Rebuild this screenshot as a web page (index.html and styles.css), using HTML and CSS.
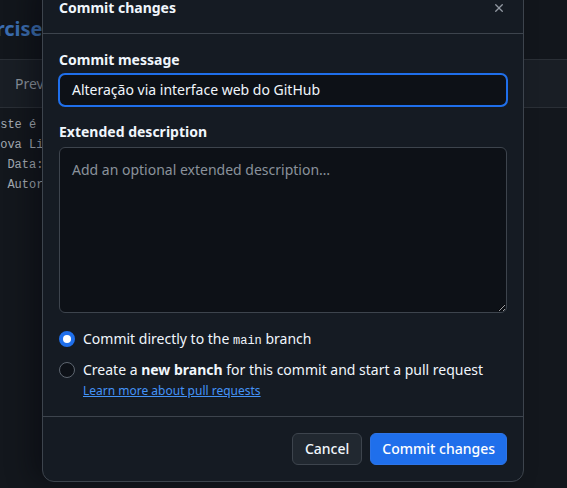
FILE: index.html
```html
<!DOCTYPE html>
<html lang="pt-BR">
<head>
<meta charset="utf-8">
<title>Commit changes</title>
<link rel="stylesheet" href="styles.css">
</head>
<body>
<div class="page">
  <div class="topbar"><span class="repo">exercises</span></div>
  <div class="toolbar"><span class="tab">Preview</span></div>
  <div class="code">
    <div class="line">Este é o</div>
    <div class="line">Nova Lista</div>
    <div class="line">  Data:</div>
    <div class="line">  Autor</div>
  </div>
</div>

<div class="dialog">
  <div class="dialog-header">
    <h1 class="dialog-title">Commit changes</h1>
    <button class="close" aria-label="Close">
      <svg width="16" height="16" viewBox="0 0 16 16"><path fill="currentColor" d="M3.72 3.72a.75.75 0 0 1 1.06 0L8 6.94l3.22-3.220a.749.749 0 0 1 1.275.326.749.749 0 0 1-.215.734L9.06 8l3.22 3.22a.749.749 0 0 1-.326 1.275.749.749 0 0 1-.734-.215L8 9.06l-3.220 3.220a.751.751 0 0 1-1.042-.018.751.751 0 0 1-.018-1.042L6.94 8 3.72 4.78a.75.75 0 0 1 0-1.060Z"/></svg>
    </button>
  </div>
  <div class="dialog-body">
    <label class="label">Commit message</label>
    <div class="input focused">Alteração via interface web do GitHub</div>
    <label class="label label-2">Extended description</label>
    <textarea class="textarea" placeholder="Add an optional extended description…"></textarea>
    <div class="radios">
      <div class="radio-row">
        <span class="radio checked"></span>
        <span class="radio-text">Commit directly to the <code>main</code> branch</span>
      </div>
      <div class="radio-row">
        <span class="radio"></span>
        <div class="radio-col">
          <span class="radio-text">Create a <b>new branch</b> for this commit and start a pull request</span>
          <a class="link" href="#">Learn more about pull requests</a>
        </div>
      </div>
    </div>
  </div>
  <div class="dialog-footer">
    <button class="btn">Cancel</button>
    <button class="btn btn-primary">Commit changes</button>
  </div>
</div>
</body>
</html>
```

FILE: styles.css
```css
* { box-sizing: border-box; }
html, body {
  margin: 0;
  padding: 0;
  width: 567px;
  height: 488px;
  overflow: hidden;
  background: #13171d;
  font-family: "Noto Sans", "Liberation Sans", sans-serif;
  font-size: 14px;
  color: #f0f6fc;
}
.page {
  display: flex;
  flex-direction: column;
  height: 488px;
}
.topbar {
  height: 60px;
  display: flex;
  align-items: center;
  border-bottom: 1px solid #2a2f36;
  background: #12161c;
}
.repo {
  margin-left: -39px;
  font-size: 20px;
  font-weight: 700;
  color: #3b6db0;
  padding-bottom: 3px;
}
.toolbar {
  height: 48px;
  display: flex;
  align-items: center;
  background: #191e25;
  border-bottom: 1px solid #2a2f36;
}
.tab {
  margin-left: 15px;
  color: #8a919a;
}
.code {
  padding-top: 7px;
  font-family: "Liberation Mono", "DejaVu Sans Mono", monospace;
  font-size: 12px;
  line-height: 20px;
  color: #a4abb3;
}
.line {
  white-space: pre;
  margin-left: -7px;
}

.dialog {
  position: absolute;
  left: 42px;
  top: -17px;
  width: 482px;
  background: #151b23;
  border: 1px solid #3d444d;
  border-radius: 12px;
  box-shadow: -12px 0 24px rgba(1, 4, 9, 0.35);
}
.dialog-header {
  height: 50px;
  display: flex;
  align-items: center;
  justify-content: space-between;
  padding: 0 8px 0 16px;
  border-bottom: 1px solid #3d444d;
}
.dialog-title {
  margin: 0;
  padding-bottom: 2px;
  font-size: 14px;
  font-weight: 700;
  line-height: 20px;
  color: #f0f6fc;
}
.close {
  width: 32px;
  height: 32px;
  display: flex;
  align-items: center;
  justify-content: center;
  background: none;
  border: 0;
  padding: 0 0 2px;
  color: #9198a1;
}
.close svg { width: 14px; height: 14px; }
.dialog-body {
  padding: 16px 16px 15px;
  display: flex;
  flex-direction: column;
}
.label {
  font-weight: 700;
  line-height: 20px;
  margin-bottom: 4px;
}
.label-2 { margin-top: 16px; margin-bottom: 5px; }
.input {
  height: 32px;
  border: 1px solid #3d444d;
  border-radius: 6px;
  background: #0d1117;
  padding: 0 12px;
  display: flex;
  align-items: center;
  line-height: 20px;
  color: #f0f6fc;
}
.input.focused {
  outline: 2px solid #1f6feb;
  outline-offset: -1px;
}
.textarea {
  display: block;
  width: 100%;
  height: 166px;
  border: 1px solid #3d444d;
  border-radius: 6px;
  background: #0d1117;
  padding: 12px 12px;
  font-family: inherit;
  font-size: 14px;
  line-height: 20px;
  color: #f0f6fc;
  resize: vertical;
  margin: 0;
}
.textarea::placeholder { color: #8a929b; }
.radios {
  margin-top: 16px;
  display: flex;
  flex-direction: column;
  gap: 9px;
}
.radio-row {
  display: flex;
  align-items: flex-start;
  gap: 8px;
}
.radio {
  flex: none;
  width: 16px;
  height: 16px;
  margin-top: 2px;
  border-radius: 50%;
  border: 1px solid #5e6670;
  background: #0d1117;
}
.radio.checked {
  background: #1f6feb;
  border: 4px solid #1f6feb;
  position: relative;
}
.radio.checked::after {
  content: "";
  position: absolute;
  inset: 0;
  border-radius: 50%;
  background: #ffffff;
}
.radio-text { line-height: 20px; }
.radio-text code {
  font-family: "Liberation Mono", "DejaVu Sans Mono", monospace;
  font-size: 12px;
}
.radio-col { display: flex; flex-direction: column; }
.link {
  margin-top: 1px;
  font-size: 12px;
  line-height: 20px;
  color: #4493f8;
  text-decoration: underline;
}
.dialog-footer {
  border-top: 1px solid #3d444d;
  padding: 16px;
  display: flex;
  justify-content: flex-end;
  gap: 8px;
}
.btn {
  height: 32px;
  padding: 0 12px;
  border-radius: 6px;
  border: 1px solid #3d444d;
  background: #212830;
  color: #f0f6fc;
  font-family: inherit;
  font-size: 14px;
  font-weight: 500;
  line-height: 20px;
}
.btn-primary {
  padding: 0 11px;
  background: #1f6feb;
  border-color: #2d74e6;
  color: #ffffff;
}
```
